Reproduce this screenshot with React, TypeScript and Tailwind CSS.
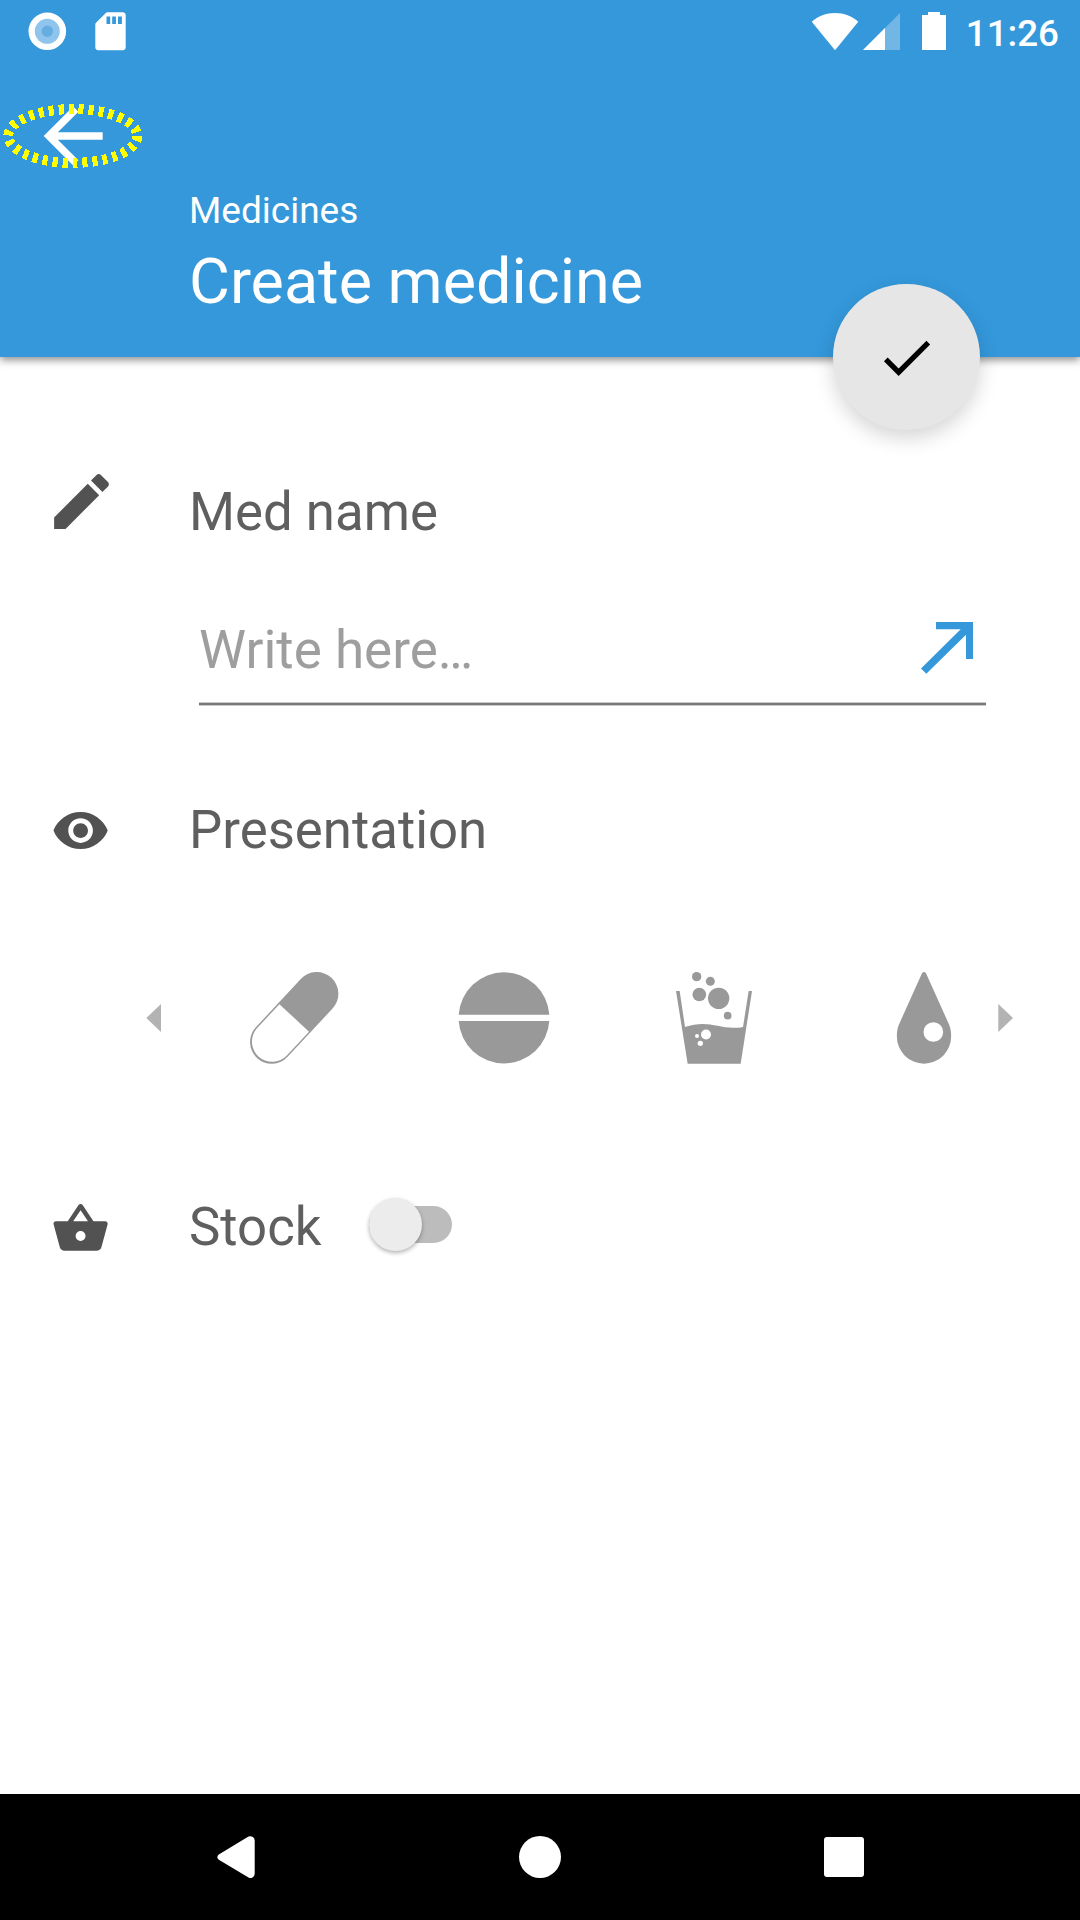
import type { ReactNode } from "react";

function StatusBar() {
  return (
    <div className="flex h-[63px] shrink-0 items-start">
      <svg className="ml-[28px] mt-[12px] h-[39px] w-[39px]" viewBox="0 0 39 39">
        <circle cx="19.3" cy="19.3" r="18.8" fill="#fff" />
        <circle cx="19.3" cy="19.3" r="12.5" fill="#8fc5ed" />
        <circle cx="19.3" cy="19.3" r="5.7" fill="#66aee2" />
      </svg>
      <svg className="ml-[28px] mt-[12px] h-[39px] w-[31px]" viewBox="0 0 31 39">
        <path
          fill="#fff"
          fillRule="evenodd"
          d="M12 .3H27.400a3.300 3.300 0 0 1 3.300 3.300V35a3.300 3.300 0 0 1-3.300 3.300H3.600A3.300 3.300 0 0 1 .3 35V12.200Q.3 11.400 1 10.800L11 .8Q11.400.3 12 .3ZM11.500 4.500V12h3.700V4.500ZM17.200 4.500V12h3.700V4.500ZM23 4.500V12h3.900V4.500Z"
        />
      </svg>
      <svg className="ml-auto mt-[12px] h-[39px] w-[48px]" viewBox="0 0 48 39">
        <path fill="#fff" d="M24 38.300.8 9.700C7 4 15 .9 24 .9S41 4 47.300 9.700Z" />
      </svg>
      <svg className="ml-[4px] mt-[12px] h-[39px] w-[37px]" viewBox="0 0 37 39">
        <path fill="#71b6e5" d="M0 38 37 1v37Z" />
        <path fill="#fff" d="M0 38 22 16v22Z" />
      </svg>
      <svg className="ml-[22px] mt-[12px] h-[39px] w-[24px]" viewBox="0 0 24 39">
        <path fill="#fff" d="M6 0h12v3h6v35H0V3h6Z" />
      </svg>
      <span className="ml-[20px] mr-[21px] mt-[12px] text-[36.75px] font-medium leading-[44px]">11:26</span>
    </div>
  );
}

function BackButton() {
  return (
    <div className="h-[65px] w-[140px]">
      <svg className="mt-[40px] ml-[3px] h-[65px] w-[140px]" viewBox="3 103 140 65">
        <g transform="translate(28.9 91.700) scale(3.69)">
          <path fill="#fff" d="M20 11H7.830l5.590-5.590L12 4l-8 8 8 8 1.410-1.410L7.830 13H20v-2z" />
        </g>
        <ellipse
          cx="72.800"
          cy="136"
          rx="64.500"
          ry="26.900"
          fill="none"
          stroke="#ff0"
          strokeWidth="10"
          strokeDasharray="5 5"
          shapeRendering="crispEdges"
        />
      </svg>
    </div>
  );
}

function Header() {
  return (
    <header className="relative flex h-[357px] shrink-0 flex-col bg-[#3498db] text-white shadow-[0_3px_8px_rgba(0,0,0,0.45)]">
      <StatusBar />
      <BackButton />
      <div className="mt-[61px] ml-[189px] text-[37px] leading-[44px]">Medicines</div>
      <h1 className="mt-[12px] ml-[189px] text-[62.85px] leading-[74px]">Create medicine</h1>
      <button className="absolute top-[283.6px] left-[833px] flex h-[146.6px] w-[147px] items-center justify-center rounded-full bg-[#e6e6e6] shadow-[0_8px_20px_rgba(0,0,0,0.17)]">
        <svg className="mt-[1px] h-[63px] w-[63px]" viewBox="0 0 24 24">
          <path d="M9 16.170L4.830 12l-1.420 1.410L9 19 21 7l-1.410-1.410z" />
        </svg>
      </button>
    </header>
  );
}

function Row({ icon, children, className }: { icon: ReactNode; children: ReactNode; className: string }) {
  return (
    <div className={`flex h-[62px] text-[52.75px] leading-[62px] text-[#5f5f5f] ${className}`}>
      <div className="w-[189px] shrink-0 text-[#525252]">{icon}</div>
      {children}
    </div>
  );
}

function Presentations() {
  return (
    <div className="mt-[111px] flex h-[92px] items-center">
      <svg className="ml-[146px] h-[28px] w-[15px] fill-[#b3b3b3]" viewBox="0 0 15 28">
        <path d="M.3 14 15 0v28Z" />
      </svg>
      <div className="ml-[87px] flex gap-[118px]">
        <svg className="h-[92px] w-[92px]" viewBox="248 972 92 92">
          <g transform="translate(294.200 1017.900) rotate(132.900)">
            <rect x="-54.700" y="-21.700" width="109.400" height="43.400" rx="21.700" fill="#999" />
            <path fill="#fff" d="M0-20.200H32.600A20 20.200 0 0 1 32.600 20.200H0Z" />
          </g>
        </svg>
        <svg className="h-[92px] w-[92px]" viewBox="0 0 92 92">
          <path fill="#999" d="M.7 42.700A45.400 45.400 0 0 1 91.300 42.700ZM.7 49H91.300A45.400 45.400 0 0 1 .7 49Z" />
        </svg>
        <svg className="h-[92px] w-[92px] fill-[#999]" viewBox="54 66 276 276">
          <path d="M78 123H89L105 231C123 226 142 222 158 222C190 222 215 233 250 233.500Q265 234 279 231L296 123H306L272 341H113Z" />
          <circle cx="140" cy="80" r="14" />
          <circle cx="181" cy="94" r="13.500" />
          <circle cx="148" cy="133.500" r="20.500" />
          <circle cx="206" cy="145" r="32" />
          <circle cx="233" cy="197" r="11.500" />
          <g fill="#fff">
            <circle cx="168" cy="253.500" r="15" />
            <circle cx="141" cy="258" r="6" />
            <circle cx="151" cy="280" r="8" />
          </g>
        </svg>
        <svg className="h-[92px] w-[92px]" viewBox="684 66 276 276">
          <path
            fill="#999"
            d="M816 70Q822 62 828 70L892 212C900 227 903.500 240 903.500 259A81.500 82 0 0 1 740.500 259C740.500 240 744 227 752 212Z"
          />
          <circle cx="850" cy="246" r="29.500" fill="#fff" />
        </svg>
      </div>
      <svg className="ml-[28px] h-[28px] w-[15px] fill-[#b3b3b3]" viewBox="0 0 15 28">
        <path d="M.3 0 15 14 .3 28Z" />
      </svg>
    </div>
  );
}

function NavBar() {
  return (
    <nav className="flex h-[126px] shrink-0 items-center bg-black fill-white">
      <svg className="ml-[217px] h-[42px] w-[38px]" viewBox="0 0 38 42">
        <path d="M1.800 18.600 31.500.6Q33.500-.4 35.500.8 37.700 1.800 37.700 4.500V37.500Q37.700 40.200 35.500 41.400 33.500 42.400 31.500 41.400L1.800 23.800Q-1.200 21.200 1.800 18.600Z" />
      </svg>
      <div className="ml-[264px] h-[42px] w-[42px] rounded-full bg-white" />
      <div className="ml-[263px] h-[40px] w-[40px] rounded-[3px] bg-white" />
    </nav>
  );
}

export default function App() {
  return (
    <div className="flex h-[1920px] w-[1080px] flex-col overflow-hidden bg-white font-[Roboto,sans-serif]">
      <Header />
      <main className="flex flex-1 flex-col">
        <Row
          className="mt-[124px]"
          icon={
            <svg className="-mt-[16.400px] ml-[44.600px] h-[73px] w-[73px] fill-current" viewBox="0 0 24 24">
              <path d="M3 17.250V21h3.750L17.810 9.940l-3.750-3.750L3 17.250zM20.710 7.040c.39-.39.39-1.020 0-1.410l-2.340-2.340c-.39-.39-1.020-.39-1.410 0l-1.830 1.830 3.750 3.750 1.830-1.830z" />
            </svg>
          }
        >
          Med name
        </Row>
        <div className="mt-[76px] ml-[199px] flex h-[87px] w-[787px] justify-between bg-[linear-gradient(#c9ccc9_1px,#787a78_1px,#787a78_3px,#c9ccc9_3px)] bg-[length:100%_4px] bg-bottom bg-no-repeat">
          <span className="text-[53px] leading-[62px] text-[#9e9e9e]">Write here…</span>
          <svg className="mt-[3px] mr-[13px] h-[52px] w-[52px]" viewBox="0 0 52 52">
            <path fill="#3498db" d="M15 0H52V37H45V12.700L5.300 51.700 0 46.500 39.700 7.300H15Z" />
          </svg>
        </div>
        <Row
          className="mt-[93px]"
          icon={
            <svg className="ml-[51.400px] mt-[2.200px] h-[59.200px] w-[59.200px] fill-current" viewBox="0 0 24 24">
              <path d="M12 4.500C7 4.500 2.730 7.610 1 12c1.730 4.390 6 7.500 11 7.500s9.270-3.110 11-7.500c-1.730-4.390-6-7.500-11-7.500zM12 17c-2.760 0-5-2.240-5-5s2.240-5 5-5 5 2.240 5 5-2.240 5-5 5zm0-8c-1.660 0-3 1.340-3 3s1.340 3 3 3 3-1.340 3-3-1.340-3-3-3z" />
            </svg>
          }
        >
          Presentation
        </Row>
        <Presentations />
        <Row
          className="mt-[132px]"
          icon={
            <svg className="ml-[51.400px] mt-[3px] h-[59.200px] w-[59.200px] fill-current" viewBox="0 0 24 24">
              <path d="M17.210 9l-4.380-6.560c-.19-.28-.51-.42-.83-.42-.32 0-.64.14-.83.43L6.790 9H2c-.55 0-1 .45-1 1 0 .09.010.18.040.27l2.540 9.270c.23.84 1 1.460 1.920 1.460h13c.92 0 1.690-.62 1.930-1.460l2.540-9.270L23 10c0-.55-.45-1-1-1h-4.790zM9 9l3-4.400L15 9H9zm3 8c-1.100 0-2-.9-2-2s.9-2 2-2 2 .9 2 2-.9 2-2 2z" />
            </svg>
          }
        >
          <span className="w-[180px]">Stock</span>
          <div className="mt-[10px] flex h-[37px] w-[83px] items-center rounded-full bg-[#bcbcbc]">
            <div className="h-[53px] w-[53px] shrink-0 rounded-full bg-[#ececec] shadow-[0_2px_4px_rgba(0,0,0,0.3)]" />
          </div>
        </Row>
      </main>
      <NavBar />
    </div>
  );
}
